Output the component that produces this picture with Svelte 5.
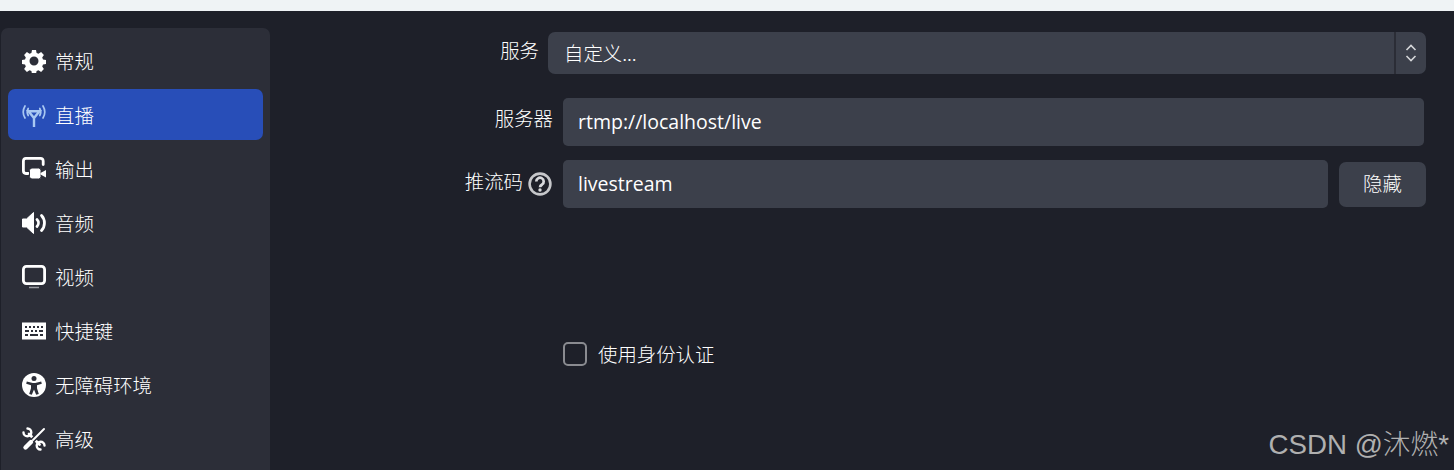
<script>
  const items = [
    { id: 'gear', label: '常规' },
    { id: 'stream', label: '直播', active: true },
    { id: 'output', label: '输出' },
    { id: 'audio', label: '音频' },
    { id: 'video', label: '视频' },
    { id: 'keys', label: '快捷键' },
    { id: 'access', label: '无障碍环境' },
    { id: 'tools', label: '高级' }
  ];
</script>

<div class="page">
  <div class="topbar"></div>
  <div class="content">
    <nav class="sidebar">
      {#each items as item}
        <div class="item" class:active={item.active}>
          <svg class="icon" viewBox="0 0 24 24" aria-hidden="true">
            {#if item.id === 'gear'}
              <path fill="#fff" fill-rule="evenodd" d="M10 1h4l.6 3 1.900.8 2.600-1.700 2.800 2.800-1.700 2.600.8 1.900 3 .6v4l-3 .6-.8 1.900 1.700 2.600-2.800 2.800-2.600-1.700-1.900.8-.6 3h-4l-.6-3-1.900-.8-2.600 1.700-2.800-2.800 1.700-2.600-.8-1.900-3-.6v-4l3-.6.8-1.900-1.700-2.600 2.800-2.800 2.600 1.700 1.900-.8zM12 7.500a4.500 4.500 0 1 0 0 9 4.500 4.500 0 0 0 0-9z"/>
            {:else if item.id === 'stream'}
              <g fill="none" stroke="#a9c8f2" stroke-width="1.700" stroke-linecap="round">
                <path d="M6.200 5.500q-2 3.500 0 7"/><path d="M3 3q-3.600 6 0 12"/>
                <path d="M17.800 5.500q2 3.500 0 7"/><path d="M21 3q3.600 6 0 12"/>
                <path stroke-width="2.400" stroke-linecap="butt" d="M6.500 8.200h11L12 15zM12 13v11"/>
              </g>
            {:else if item.id === 'output'}
              <path fill="none" stroke="#fff" stroke-width="2.800" stroke-linecap="round" d="M6 16.500H4a2.800 2.800 0 0 1-2.600-2.800V4A2.800 2.800 0 0 1 4 1.400h14.500A2.800 2.800 0 0 1 21.200 4v3.500"/>
              <rect x="7.500" y="11" width="11.500" height="11" rx="2.500" fill="#fff" stroke="#2c2e38" stroke-width="1"/>
              <path fill="#fff" d="M18.500 16l5.500-3v7.500l-5.500-3z"/>
            {:else if item.id === 'audio'}
              <path fill="#fff" stroke="#fff" stroke-linejoin="round" d="M.5 8h4l7-6.500v21l-7-6.500h-4z"/>
              <path fill="none" stroke="#fff" stroke-width="2.800" stroke-linecap="round" d="M15 8.500a5 5 0 0 1 0 7M19.500 4.500a11 11 0 0 1 0 15"/>
            {:else if item.id === 'video'}
              <rect x="1.400" y="1.400" width="21.200" height="17.200" rx="3" fill="none" stroke="#fff" stroke-width="2.800"/>
              <path stroke="#9a9ca3" stroke-width="1.500" d="M7 22.500h10"/>
            {:else if item.id === 'keys'}
              <path fill="#fff" fill-rule="evenodd" d="M0 3.500h24v17H0zM3 7v2h2V7zm4 0v2h2V7zm4 0v2h2V7zm4 0v2h2V7zm4 0v2h2V7zM3 11v2h4v-2zm6 0v2h2v-2zm4 0v2h2v-2zm4 0v2h4v-2zM3 15v2h3v-2zm5 0v2h8v-2zm10 0v2h3v-2z"/>
            {:else if item.id === 'access'}
              <circle cx="12" cy="12" r="12" fill="#fff"/>
              <circle cx="12" cy="5.500" r="2.500" fill="#2c2e38"/>
              <path fill="#2c2e38" d="M4.800 8.500l6 1.500h2.400l6-1.500.6 2.200-4.800 1.500v3l1.800 5.800-2.600.7-2.200-5.200-2.200 5.200-2.600-.7 1.800-5.800v-3L4.200 10.700z"/>
            {:else}
              <g fill="none" stroke="#fff" stroke-linecap="round">
                <path stroke-width="2.800" d="M7 7l10.500 10.500"/>
                <path stroke-width="2.400" d="M1.500 5.500A3.900 3.900 0 1 0 5.500 1.500"/>
                <path stroke-width="2.400" d="M22.500 18.500A3.900 3.900 0 1 0 18.500 22.500"/>
                <path stroke="#2c2e38" stroke-width="5" stroke-linecap="butt" d="M15.500 8.500l-7 7"/>
                <path stroke-width="2" d="M22 2L11 13"/>
                <path stroke-width="4.400" d="M9 15l-5.500 5.500"/>
              </g>
            {/if}
          </svg>
          <span class="item-label">{item.label}</span>
        </div>
      {/each}
    </nav>

    <main class="form">
      <div class="row row-service">
        <span class="label">服务</span>
        <div class="select">
          <span class="select-value">自定义...</span>
          <span class="stepper">
            <svg viewBox="0 0 12 20" width="12" height="20" aria-hidden="true">
              <path fill="none" stroke="#d4d5d8" stroke-width="1.600" d="M1.500 7 6 2.500 10.500 7M1.500 13 6 17.500 10.500 13"/>
            </svg>
          </span>
        </div>
      </div>

      <div class="row row-server">
        <span class="label">服务器</span>
        <div class="input">rtmp://localhost/live</div>
      </div>

      <div class="row row-key">
        <span class="label">
          推流码
          <svg class="help" viewBox="0 0 24 24" aria-hidden="true">
            <circle cx="12" cy="12" r="10.400" fill="none" stroke="#c6c7ca" stroke-width="2.600"/>
            <path fill="none" stroke="#d8d9dc" stroke-width="2.700" d="M8.300 9.500a3.700 3.700 0 1 1 5.800 3c-1.400.9-2.100 1.400-2.100 2.800"/>
            <circle cx="12" cy="18" r="1.700" fill="#d8d9dc"/>
          </svg>
        </span>
        <div class="input">livestream</div>
        <button class="button" type="button"><span>隐藏</span></button>
      </div>

      <label class="check">
        <span class="box"></span>
        <span>使用身份认证</span>
      </label>
    </main>
  </div>
  <div class="watermark">CSDN @沐燃*</div>
</div>

<style>
  :global(body) {
    margin: 0;
    background: #1e2029;
  }
  .page {
    position: relative;
    display: flex;
    flex-direction: column;
    height: 470px;
    overflow: hidden;
    background: #1e2029;
    color: #fff;
    font-family: "Noto Sans CJK SC", "Open Sans", sans-serif;
    font-size: 19.4px;
    font-weight: 300;
  }
  .topbar {
    height: 11px;
    flex: none;
    background: #eff3f5;
  }
  .content {
    flex: 1;
    display: flex;
    padding: 17px 0 0 1px;
    min-height: 0;
  }
  .sidebar {
    width: 255px;
    flex: none;
    display: flex;
    flex-direction: column;
    gap: 3px;
    padding: 7px 7px 0;
    background: #2c2e38;
    border-radius: 7px 7px 0 0;
  }
  .item {
    height: 51px;
    flex: none;
    display: flex;
    align-items: center;
    gap: 9px;
    padding-left: 14px;
    border-radius: 7px;
  }
  .item.active {
    background: #284eb8;
  }
  .item-label {
    padding-bottom: 1px;
  }
  .icon {
    width: 24px;
    height: 24px;
    flex: none;
  }
  .form {
    flex: 1;
    min-width: 0;
    padding: 4px 28px 0 0;
    display: flex;
    flex-direction: column;
  }
  .row {
    display: flex;
    align-items: center;
  }
  .label {
    flex: none;
    display: flex;
    align-items: center;
    justify-content: flex-end;
    gap: 5px;
    line-height: 1;
    padding-bottom: 8px;
  }
  .row-service {
    height: 42px;
  }
  .row-service .label {
    width: 269px;
    margin-right: 9px;
    padding-bottom: 6px;
  }
  .select {
    flex: 1;
    height: 42px;
    display: flex;
    align-items: stretch;
    background: #3c404b;
    border-radius: 7px;
    overflow: hidden;
  }
  .select-value {
    flex: 1;
    display: flex;
    align-items: center;
    padding: 0 0 2px 16px;
  }
  .stepper {
    width: 30px;
    flex: none;
    display: flex;
    align-items: center;
    justify-content: center;
    border-left: 2px solid #2b2d36;
  }
  .row-server {
    margin-top: 24px;
    height: 48px;
    margin-right: 2px;
  }
  .row-server .label {
    width: 283px;
    margin-right: 10px;
  }
  .row-key {
    margin-top: 14px;
    height: 48px;
  }
  .row-key .label {
    width: 282px;
    margin-right: 11px;
    padding-bottom: 6px;
  }
  .input {
    flex: 1;
    min-width: 0;
    height: 48px;
    box-sizing: border-box;
    display: flex;
    align-items: center;
    padding: 0 15px 2px;
    border-radius: 5px;
    background: #3c404b;
    color: #fff;
    font-family: "Open Sans", sans-serif;
    font-size: 19.5px;
    font-weight: 400;
  }
  .help {
    width: 24px;
    height: 24px;
    flex: none;
    margin-top: 6px;
  }
  .button {
    width: 87px;
    height: 45px;
    flex: none;
    margin-left: 11px;
    border: 0;
    border-radius: 7px;
    background: #3c404b;
    color: #fff;
    font: inherit;
    padding: 0 0 4px;
  }
  .check {
    display: flex;
    align-items: center;
    gap: 11px;
    margin: 131px 0 0 293px;
  }
  .box {
    width: 20px;
    height: 20px;
    border: 2px solid #8a8b90;
    border-radius: 5px;
    flex: none;
  }
  .watermark {
    position: absolute;
    right: 5px;
    bottom: 10px;
    font-family: "Liberation Sans", "Noto Sans CJK SC", sans-serif;
    font-size: 27.7px;
    font-weight: 300;
    line-height: 1.1;
    color: #b0b0b0;
  }
</style>
